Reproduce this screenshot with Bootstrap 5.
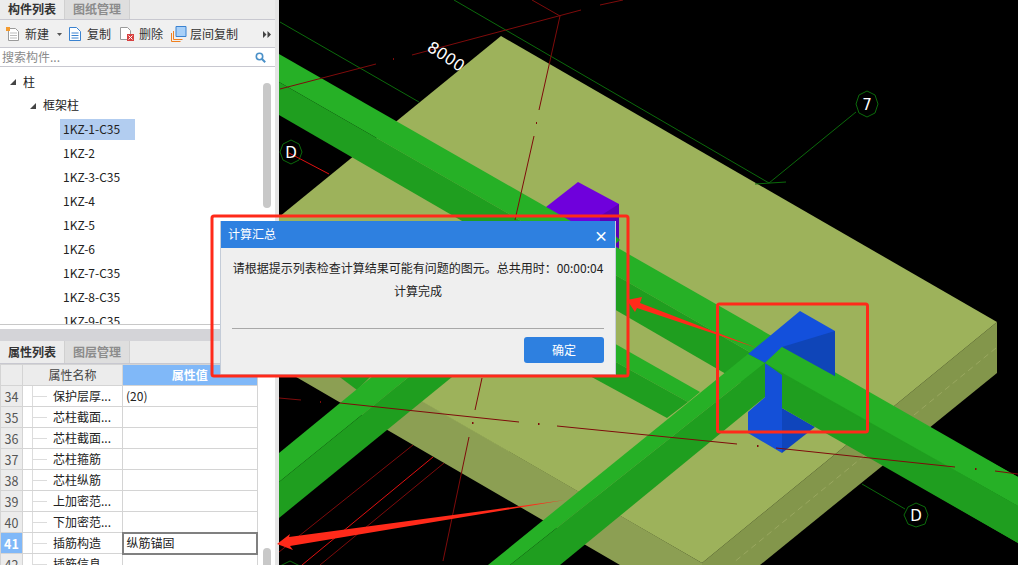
<!DOCTYPE html>
<html lang="zh">
<head>
<meta charset="utf-8">
<title>计算汇总</title>
<link href="https://cdn.jsdelivr.net/npm/bootstrap@5.3.0/dist/css/bootstrap.min.css" rel="stylesheet">
<style>
html,body{height:565px;overflow:hidden;background:#000}
body{font-family:"Noto Sans CJK SC","Liberation Sans",sans-serif;font-size:12px;color:#222;line-height:1.2}
.app{width:1018px;height:565px}
.side{width:279px;height:565px;flex:none;background:#fff;border-right:4px solid #e4e4e4;overflow:hidden}
.side>*{flex-shrink:0}
.tabrow{height:20px;background:#ececec;border-bottom:1px solid #c8c8d0}
.tabx{width:65px;display:flex;align-items:center;justify-content:center;font-weight:700;color:#333;border-right:1px solid #d0d0d0}
.tabx.off{background:#dedede;color:#8c8c8c}
.tools{height:28px;background:#f0f0f0;border-bottom:1px solid #c8c8d0;padding:1px 0 0 5px;color:#333}
.tools svg{flex:none}
.find{height:19px;border-bottom:1px solid #c8c8d0;padding:1px 9px 0 2px;color:#8a8a8a}
.tree{height:258px;overflow:hidden;position:relative;border-bottom:1px solid #c8c8c8;color:#222}
.tnode{height:24px;display:flex;align-items:center}
.tnode.l0{padding-left:10px;margin-top:3px}
.tnode.l1{padding-left:30px;height:23px}
.tnode.l2{padding-left:60px}
.tnode span{padding:1px 3px;line-height:17px;height:21px;width:75px}
.tnode.sel span{background:#b2cdf0}
.tw{width:0;height:0;border-style:solid;border-width:0 0 6px 6px;border-color:transparent transparent #444 transparent;margin-right:7px}
.bar{position:absolute;right:4px;width:8px;background:#c8c8c8;border-radius:4px}
.split{height:12px;margin-top:4px;background:#d4d4d8}
.tabrow2{height:23px;background:#ececec;border-bottom:1px solid #c8c8d0}
.gridx{width:258px;border-collapse:collapse;table-layout:fixed}
.gridx td,.gridx th{height:21px;padding:0;border:1px solid #d4d4d4;font-weight:400;white-space:nowrap;overflow:hidden}
.gridx .nm{width:22px;background:#ececec;color:#555;text-align:center;font-size:12.5px}
.gridx .lbl{width:100px;padding-left:30px;position:relative}
.gridx .lbl::before{content:"";position:absolute;left:9px;top:0;bottom:0;border-left:1px solid #dcdcdc}
.gridx .lbl::after{content:"";position:absolute;left:9px;top:10px;width:15px;border-top:1px solid #dcdcdc}
.gridx th{background:#ececec;text-align:center;color:#444}
.gridx th.pick{background:#80b8f8;color:#fff;font-weight:700}
.gridx .val{padding-left:3px}
.gridx .nm.pick{background:#80b8f8;color:#fff;font-weight:700}
.gridx td.cur{border:2px solid #808080}
.stage{flex:none;width:739px;height:565px;display:block;background:#000}
.over{position:absolute;left:0;top:0;width:1018px;height:565px;pointer-events:none}
.dlg{position:absolute;left:220px;top:221px;width:396px;height:154px;background:#efefef;border:1px solid #c4ccd8;border-top:0;color:#222}
.dlghead{height:27px;background:#2e80e0;color:#fff;padding:0 7px;font-size:12px}
.dlgx{color:#fff;font-size:14px;font-weight:700;line-height:1;background:none;border:0;padding:0}
.dlgmsg{padding:8px 11px 0;text-align:center;line-height:23px;height:80px}
.dlgmsg p{margin:0;white-space:nowrap}
.dlgrule{margin:0 11px;height:1px;background:#a8a8a8}
.dlgok{width:80px;height:26px;padding:0;background:#2e80e0;border:0;border-radius:3px;color:#fff;font-size:12px;margin:8px 11px 0 0}
.cad{font-family:"DejaVu Sans",sans-serif;fill:#fff}
</style>
</head>
<body>
<div class="app d-flex position-relative">
  <aside class="side d-flex flex-column">
    <div class="tabrow d-flex"><div class="tabx">构件列表</div><div class="tabx off">图纸管理</div></div>
    <div class="tools d-flex align-items-center">
      <svg width="16" height="16" viewBox="0 0 16 16"><path d="M3.500 2.500h7l3 3v9h-10z" fill="#fff" stroke="#9a9a9a"/><path d="M5 7h7M5 9.500h7M5 12h7" stroke="#bbb"/><path d="M1 1h4v4H1z" fill="#f39a2e"/></svg>
      <span class="ms-1">新建</span>
      <svg class="ms-2" width="5" height="3" viewBox="0 0 5 3"><path d="M0 0h5L2.500 3z" fill="#555"/></svg>
      <svg style="margin-left:6px" width="14" height="16" viewBox="0 0 14 16"><path d="M1.500 1.500h7l4 4v9h-11z" fill="#fff" stroke="#3a82d0"/><path d="M3.500 7h7M3.500 9.500h7M3.500 12h7" stroke="#3a82d0"/></svg>
      <span style="margin-left:5px">复制</span>
      <svg style="margin-left:8px" width="16" height="16" viewBox="0 0 16 16"><path d="M1.500 1.500h7l3 3v9h-10z" fill="#fff" stroke="#9a9a9a"/><path d="M8 8h7v7H8z" fill="#d84040"/><path d="M9.500 9.500l4 4m0-4l-4 4" stroke="#fff"/></svg>
      <span style="margin-left:4px">删除</span>
      <svg style="margin-left:8px" width="16" height="16" viewBox="0 0 16 16"><path d="M.5 7v8.500h9M2.500 5v8.500h9" fill="none" stroke="#f08020" stroke-width="1"/><path d="M5 .5h10v10H5z" fill="#a8d0f8" stroke="#3a82d0"/></svg>
      <span style="margin-left:3px">层间复制</span>
      <svg class="ms-auto" style="margin-right:4px" width="8" height="7" viewBox="0 0 8 7"><path d="M0 0l3.500 3.500L0 7zM4.500 0L8 3.500 4.500 7z" fill="#444"/></svg>
    </div>
    <div class="find d-flex align-items-center justify-content-between"><span>搜索构件...</span>
      <svg width="11" height="11" viewBox="0 0 11 11"><circle cx="4.500" cy="4.500" r="3.200" fill="none" stroke="#4a90c8" stroke-width="1.600"/><path d="M7 7l3.200 3.200" stroke="#4a90c8" stroke-width="2"/></svg></div>
    <div class="tree">
      <div class="tnode l0"><i class="tw"></i>柱</div>
      <div class="tnode l1"><i class="tw"></i>框架柱</div>
      <div class="tnode l2 sel"><span>1KZ-1-C35</span></div>
      <div class="tnode l2"><span>1KZ-2</span></div>
      <div class="tnode l2"><span>1KZ-3-C35</span></div>
      <div class="tnode l2"><span>1KZ-4</span></div>
      <div class="tnode l2"><span>1KZ-5</span></div>
      <div class="tnode l2"><span>1KZ-6</span></div>
      <div class="tnode l2"><span>1KZ-7-C35</span></div>
      <div class="tnode l2"><span>1KZ-8-C35</span></div>
      <div class="tnode l2"><span>1KZ-9-C35</span></div>
      <div class="bar" style="top:16px;height:125px"></div>
    </div>
    <div class="split"></div>
    <div class="tabrow2 d-flex"><div class="tabx">属性列表</div><div class="tabx off">图层管理</div></div>
    <div class="position-relative flex-grow-1">
      <table class="gridx">
        <tr><th class="nm"></th><th style="width:100px">属性名称</th><th class="pick">属性值</th></tr>
        <tr><td class="nm">34</td><td class="lbl">保护层厚...</td><td class="val">(20)</td></tr>
        <tr><td class="nm">35</td><td class="lbl">芯柱截面...</td><td class="val"></td></tr>
        <tr><td class="nm">36</td><td class="lbl">芯柱截面...</td><td class="val"></td></tr>
        <tr><td class="nm">37</td><td class="lbl">芯柱箍筋</td><td class="val"></td></tr>
        <tr><td class="nm">38</td><td class="lbl">芯柱纵筋</td><td class="val"></td></tr>
        <tr><td class="nm">39</td><td class="lbl">上加密范...</td><td class="val"></td></tr>
        <tr><td class="nm">40</td><td class="lbl">下加密范...</td><td class="val"></td></tr>
        <tr><td class="nm pick">41</td><td class="lbl">插筋构造</td><td class="val cur">纵筋锚固</td></tr>
        <tr><td class="nm">42</td><td class="lbl">插筋信息</td><td class="val"></td></tr>
      </table>
      <div class="bar" style="top:184px;height:20px"></div>
    </div>
  </aside>

  <svg class="stage" viewBox="279 0 739 565" xmlns="http://www.w3.org/2000/svg">
    <!-- slab -->
    <polygon points="279,318 702,563 760,565 620,565 279,367" fill="#8c9f53"/>
    <polygon points="997,322 997,373 760,565 702,565 702,563" fill="#83964b"/>
    <polygon points="501,36 997,322 702,563 279,319 279,217" fill="#9db25b"/>
    <path d="M996 348L733 563" stroke="#9aa860" stroke-dasharray="6 4" fill="none"/>
    <!-- purple column -->
    <polygon points="546,207 578,182 619,204 619,260 546,260" fill="#6f00dc"/>
    <polygon points="619,204 619,260 600,260 600,216" fill="#5d00b8"/>
    <!-- beam A -->
    <polygon points="279,54 1018,477 1018,506 279,82" fill="#26b026"/>
    <polygon points="279,82 1018,506 1018,543 279,115" fill="#1f9e1f"/>
    <!-- beam B -->
    <polygon points="450,250 700,392 688,402 450,270" fill="#26b026"/>
    <polygon points="450,270 688,402 667,418 450,300" fill="#1f9e1f"/>
    <polygon points="337,375 372,375 357,390" fill="#1f9e1f"/>
    <!-- blue column -->
    <polygon points="800,311 835,331 835,377 782,347 765,363 748,354" fill="#1350dc"/>
    <polygon points="835,331 835,400 782,347" fill="#0f45b8"/>
    <polygon points="765,363 782,375 782,453 748,433 748,412 765,397" fill="#1450d8"/>
    <polygon points="782,408 815,427 782,453" fill="#0f45bc"/>
    <!-- beam A repaint at the front of column -->
    <polygon points="782,347 1018,477 1018,506 765,363" fill="#26b026"/>
    <polygon points="782,375 1018,506 1018,543 815,427 782,408" fill="#1f9e1f"/>
    <!-- beam C -->
    <polygon points="488,565 748,354 765,363 510,565" fill="#26b026"/>
    <polygon points="510,565 765,363 765,397 560,565" fill="#1f9e1f"/>
    <!-- beam D -->
    <polygon points="279,453 561,222 600,222 279,482" fill="#26b026"/>
    <polygon points="279,482 600,222 620,240 279,518" fill="#1f9e1f"/>
    <!-- CAD lines -->
    <g stroke="#0b6a0b" fill="none" stroke-width="1">
      <path d="M280 22L419 102M454 0L769 183M769 183L856 112M755 184L786 182M862 484L905 509"/>
      <polygon points="867,91 875,95 878,104 875,113 867,117 859,113 856,104 859,95"/>
      <polygon points="291,140 299,144 302,152 299,160 291,164 283,160 280,152 283,144"/>
      <polygon points="916,503 925,507 928,515 925,524 916,527 908,524 904,515 908,507"/>
      <polygon points="290,561 300,566 280,566"/>
    </g>
    <g stroke="#7e0b0b" fill="none" stroke-width="1">
      <path d="M280 89L376 64M412 55L581 10M532 0L560 16L539 110M600 5L623 0M534 136L515 220"/>
      <path d="M279 398L301 400M340 403L519 422M557 426L737 444M776 448L955 467M995 471L1018 474"/>
      <path d="M482 378L475 410M469 437L443 561M413 445L279 552M444 463L320 565"/>
      <path d="M393 59h1M536 123h1M320 402h1M472 423h1.500M538 424h1.500M757 446h1.500M975 469h1.500" stroke-width="2"/>
    </g>
    <path d="M289 153L329 174M433 457L302 565" stroke="#e01010" fill="none" stroke-width="1"/>
    <text class="cad" font-size="16" transform="translate(426,50) rotate(33)">8000</text>
    <text class="cad" font-size="15" x="867" y="110" text-anchor="middle">7</text>
    <text class="cad" font-size="15" x="291" y="158" text-anchor="middle">D</text>
    <text class="cad" font-size="15" x="916" y="521" text-anchor="middle">D</text>
  </svg>

  <div class="dlg d-flex flex-column" role="dialog">
    <div class="dlghead d-flex align-items-center justify-content-between"><span>计算汇总</span><button type="button" class="dlgx" aria-label="关闭">×</button></div>
    <div class="dlgmsg"><p>请根据提示列表检查计算结果可能有问题的图元。总共用时&#xFF1A;00:00:04</p><p>计算完成</p></div>
    <div class="dlgrule"></div>
    <div class="d-flex justify-content-end"><button type="button" class="dlgok">确定</button></div>
  </div>

  <svg class="over" viewBox="0 0 1018 565" xmlns="http://www.w3.org/2000/svg">
    <rect x="212" y="216" width="416" height="160" rx="2" fill="none" stroke="#ff2a1a" stroke-width="3"/>
    <rect x="717.500" y="304" width="150" height="128" rx="2" fill="none" stroke="#ff2a1a" stroke-width="3"/>
    <polygon points="757,348 640,303 642,297 627,300 635,312 637,308" fill="#ff2a1a"/>
    <polygon points="565,500 289,537 290,534 277,544 293,550 290,546" fill="#ff2a1a"/>
  </svg>
</div>
<script src="https://cdn.jsdelivr.net/npm/bootstrap@5.3.0/dist/js/bootstrap.bundle.min.js"></script>
</body>
</html>
